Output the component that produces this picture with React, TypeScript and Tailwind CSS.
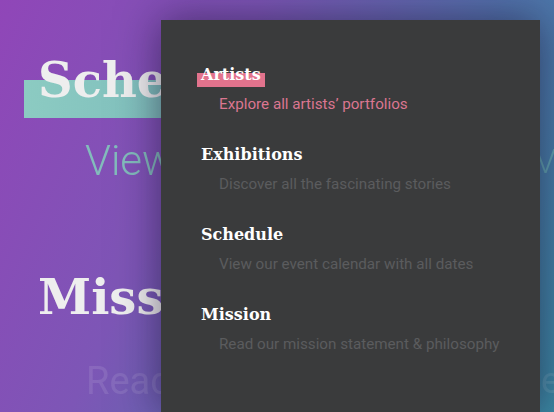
const items = [
  { title: "Artists", desc: "Explore all artists\u2019 portfolios", active: true },
  { title: "Exhibitions", desc: "Discover all the fascinating stories", active: false },
  { title: "Schedule", desc: "View our event calendar with all dates", active: false },
  { title: "Mission", desc: "Read our mission statement & philosophy", active: false },
];

const serif = { fontFamily: '"DejaVu Serif", "Liberation Serif", serif' };
const sans = { fontFamily: 'Roboto, "Noto Sans", sans-serif' };

export default function App() {
  return (
    <div className="relative w-[554px] h-[412px] overflow-hidden bg-[linear-gradient(115deg,#9046b8_0%,#7d56b6_35%,#5273ac_68%,#3a88a2_100%)]">
      {/* Blurred page behind the menu */}
      <div className="flex flex-col pl-[38px] pt-[50px] blur-[0.6px]">
        <div className="relative h-[60px]">
          <div className="absolute left-[-14px] top-[30px] w-[200px] h-[38px] bg-[linear-gradient(90deg,#8ccbc2,#7ab9ba)]" />
          <h1 className="relative text-[48px] leading-[60px] font-bold text-[#eeeeee]" style={serif}>
            Schedule
          </h1>
        </div>
        <div className="mt-[26px] flex items-start h-[50px]">
          <p className="pl-[47px] text-[42px] leading-[50px] font-light text-[#83bcbc]" style={sans}>
            View our event
          </p>
          <span className="ml-auto mr-[-2px] text-[34px] leading-[50px] font-light text-[#5fa3b0]" style={sans}>
            V
          </span>
        </div>
        <h1 className="mt-[81px] text-[48px] leading-[60px] font-bold text-[#eeeeee]" style={serif}>
          Mission
        </h1>
        <div className="mt-[31px] flex items-start h-[46px]">
          <p className="pl-[48px] text-[38px] leading-[46px] text-white/10" style={sans}>
            Read our
          </p>
          <span className="ml-auto mr-[-6px] text-[36px] leading-[46px] text-white/10" style={sans}>
            e
          </span>
        </div>
      </div>

      {/* Menu panel */}
      <nav className="absolute left-[161px] top-[20px] bottom-0 w-[379px] bg-[#3a3b3c] shadow-[0_0_40px_rgba(20,10,40,0.55)] pl-[40px] pt-[42px]">
        <ul className="flex flex-col gap-[28px]">
          {items.map((item) => (
            <li key={item.title} className="flex flex-col">
              <div className="h-[24px]">
                <span className="relative inline-block">
                  {item.active && (
                    <span className="absolute left-[-4px] right-[-4px] top-[11px] h-[14px] bg-[#e2738d]" />
                  )}
                  <span className="relative text-[16px] leading-[24px] font-bold text-white" style={serif}>
                    {item.title}
                  </span>
                </span>
              </div>
              <p
                className={`mt-[8px] pl-[18px] text-[15.2px] leading-[20px] ${item.active ? "text-[#db7690]" : "text-[#5b5c5e]"}`}
                style={sans}
              >
                {item.desc}
              </p>
            </li>
          ))}
        </ul>
      </nav>
    </div>
  );
}
